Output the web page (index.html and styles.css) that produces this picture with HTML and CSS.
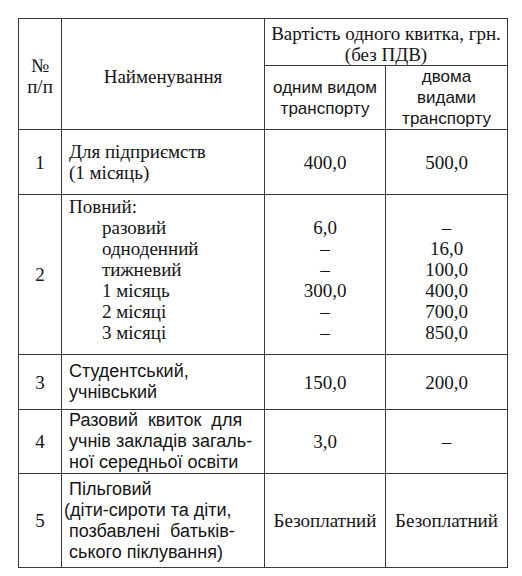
FILE: index.html
```html
<!DOCTYPE html>
<html lang="uk">
<head>
<meta charset="utf-8">
<link rel="stylesheet" href="styles.css">
</head>
<body>
<div class="page">
<table class="tariffs">
  <colgroup>
    <col class="c-num">
    <col class="c-name">
    <col class="c-one">
    <col class="c-two">
  </colgroup>
  <thead>
    <tr class="h1">
      <th rowspan="2" class="center">№<br>п/п</th>
      <th rowspan="2" class="center">Найменування</th>
      <th colspan="2" class="center">Вартість одного квитка, грн.<br>(без ПДВ)</th>
    </tr>
    <tr class="h2">
      <th class="center sub">одним видом<br>транспорту</th>
      <th class="center sub">двома<br>видами<br>транспорту</th>
    </tr>
  </thead>
  <tbody>
    <tr class="r1">
      <td class="center">1</td>
      <td class="name">Для підприємств<br>(1 місяць)</td>
      <td class="center">400,0</td>
      <td class="center">500,0</td>
    </tr>
    <tr class="r2">
      <td class="center">2</td>
      <td class="name top">
        <div>Повний:</div>
        <div class="ind">разовий</div>
        <div class="ind">одноденний</div>
        <div class="ind">тижневий</div>
        <div class="ind">1 місяць</div>
        <div class="ind">2 місяці</div>
        <div class="ind">3 місяці</div>
      </td>
      <td class="center top">
        <div>&nbsp;</div>
        <div>6,0</div>
        <div>–</div>
        <div>–</div>
        <div>300,0</div>
        <div>–</div>
        <div>–</div>
      </td>
      <td class="center top">
        <div>&nbsp;</div>
        <div>–</div>
        <div>16,0</div>
        <div>100,0</div>
        <div>400,0</div>
        <div>700,0</div>
        <div>850,0</div>
      </td>
    </tr>
    <tr class="r3">
      <td class="center">3</td>
      <td class="name sans">Студентський,<br>учнівський</td>
      <td class="center">150,0</td>
      <td class="center">200,0</td>
    </tr>
    <tr class="r4">
      <td class="center">4</td>
      <td class="name sans">
        <div class="wide">Разовий квиток для</div>
        <div>учнів закладів загаль-</div>
        <div>ної середньої освіти</div>
      </td>
      <td class="center">3,0</td>
      <td class="center">–</td>
    </tr>
    <tr class="r5">
      <td class="center">5</td>
      <td class="name sans">
        <div>Пільговий</div>
        <div class="paren">(діти-сироти та діти,</div>
        <div class="wide">позбавлені батьків-</div>
        <div>ського піклування)</div>
      </td>
      <td class="center">Безоплатний</td>
      <td class="center">Безоплатний</td>
    </tr>
  </tbody>
</table>
</div>
</body>
</html>
```

FILE: styles.css
```css
html, body {
  margin: 0;
  padding: 0;
  background: #ffffff;
}

.page {
  padding: 18px 0 0 18px;
}

.tariffs {
  border-collapse: collapse;
  table-layout: fixed;
  width: 489px;
  font-family: "Liberation Serif";
  font-size: 19px;
  line-height: 21px;
  color: #151515;
}

.c-num { width: 43px; }
.c-name { width: 203px; }
.c-one { width: 121px; }
.c-two { width: 122px; }

.tariffs th,
.tariffs td {
  border: 1px solid #3a3a3a;
  padding: 0 2px 0 7px;
  vertical-align: middle;
  font-weight: normal;
  font-family: "Liberation Serif";
}

.tariffs th.center,
.tariffs td.center {
  text-align: center;
  padding-left: 1px;
  padding-right: 1px;
}

.tariffs th.sub {
  font-family: "Liberation Sans";
  font-size: 17px;
}

.tariffs td.sans {
  font-family: "Liberation Sans";
  font-size: 18px;
}

.name { text-align: left; }

.tariffs td.top {
  vertical-align: top;
  padding-top: 1px;
}

.ind { padding-left: 33px; }

.wide { word-spacing: 5px; }

.paren { margin-left: -5px; }

.h1 { height: 44px; }
.h1 th { padding-top: 4px; }
.h2 { height: 64px; }
.r1 { height: 65px; }
.r2 { height: 160px; }
.r3 { height: 55px; }
.r4 { height: 63px; }
.r5 { height: 94px; }
```
